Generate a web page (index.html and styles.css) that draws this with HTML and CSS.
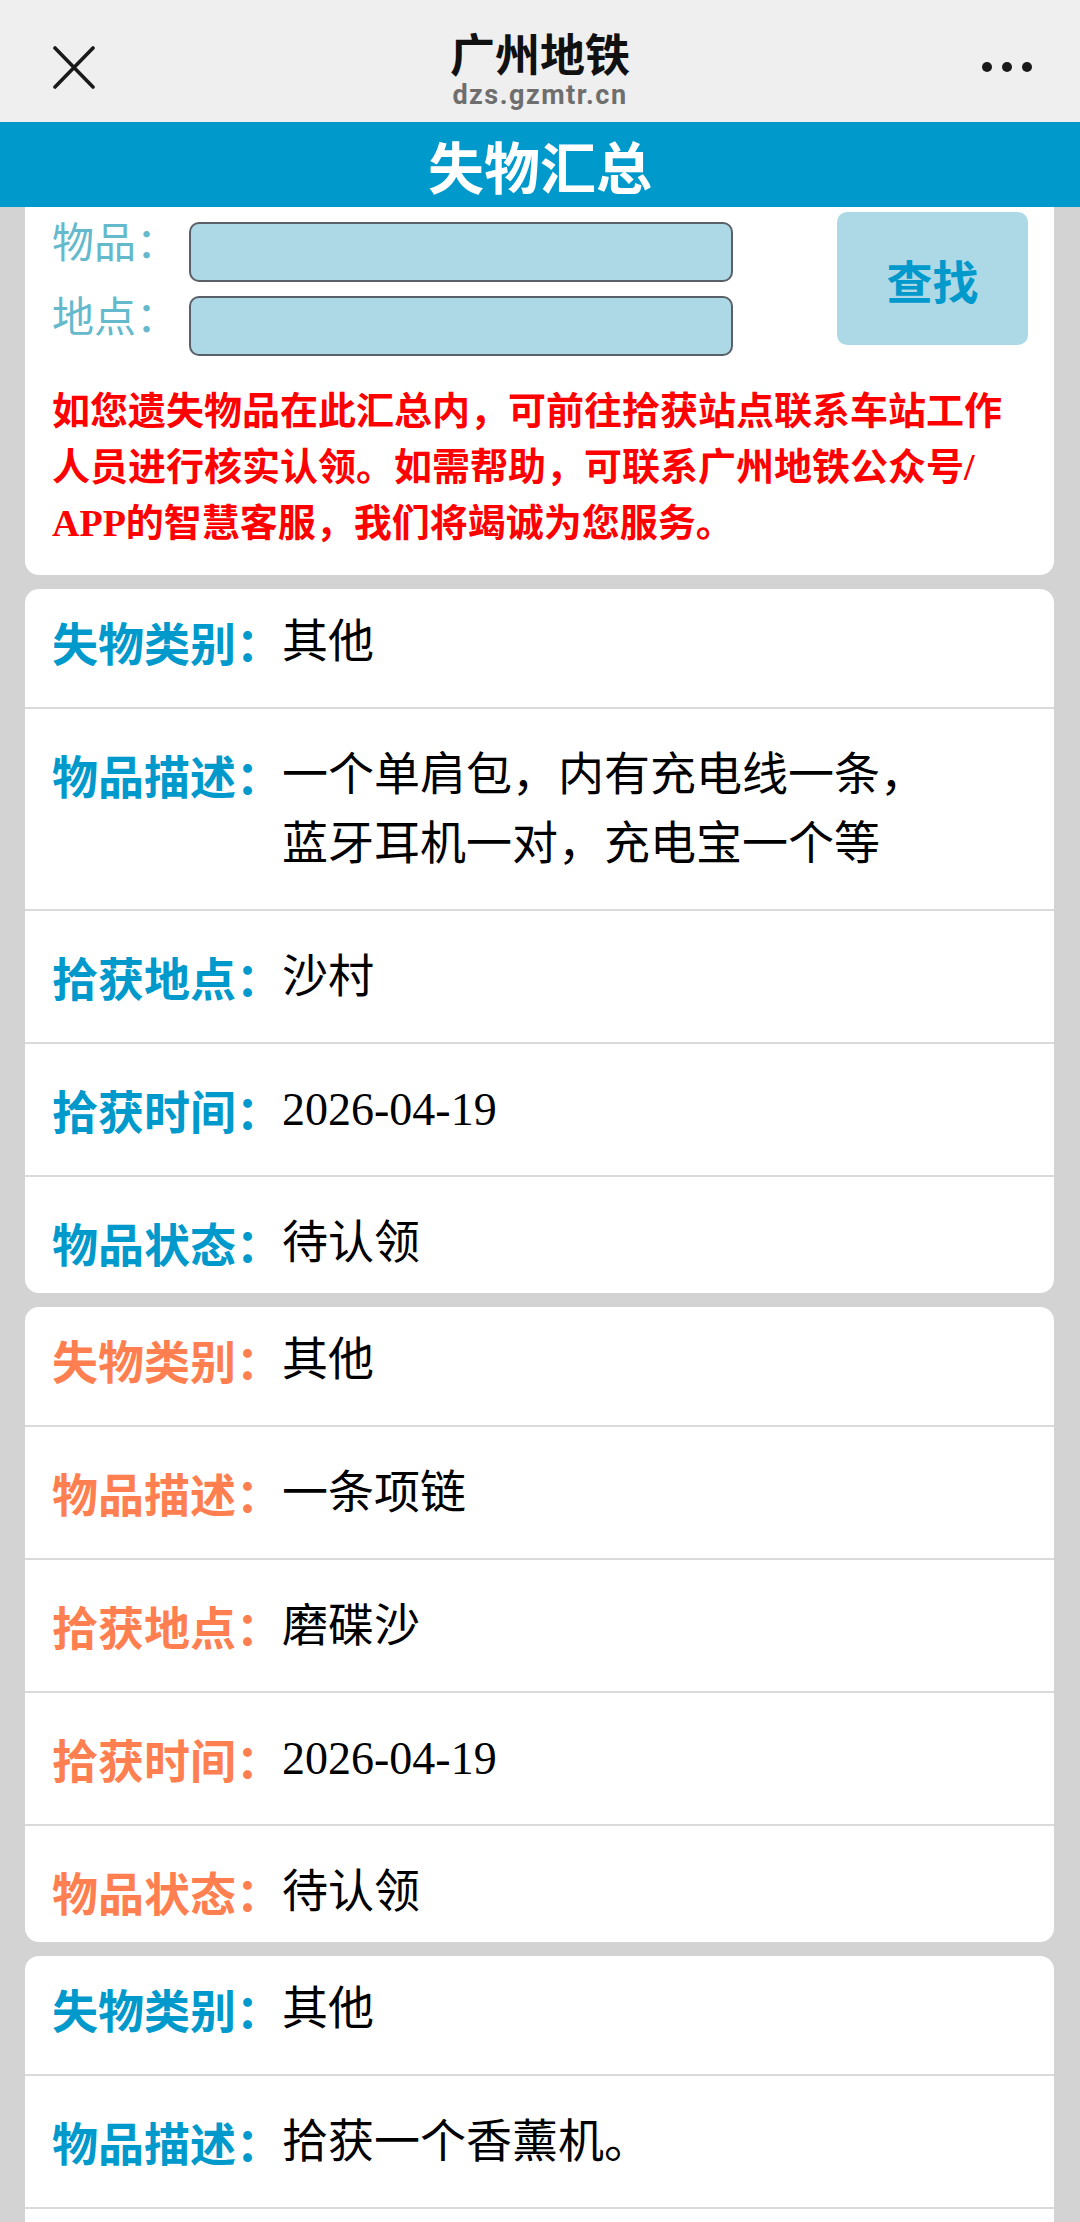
FILE: index.html
```html
<!DOCTYPE html>
<html lang="zh-CN">
<head>
  <meta charset="UTF-8">
  <title>失物汇总</title>
  <meta name="viewport" content="width=device-width, initial-scale=1.0">
  <link rel="stylesheet" href="styles.css">
</head>
<body>

  <div class="topbar">
    <svg class="close" viewBox="0 0 42 43" width="42" height="43">
      <path d="M2 2 L40 41 M40 2 L2 41" stroke="#1a1a1a" stroke-width="3.6" stroke-linecap="round" fill="none"/>
    </svg>
    <div class="title">
      <h1>广州地铁</h1>
      <div class="domain">dzs.gzmtr.cn</div>
    </div>
    <svg class="more" viewBox="0 0 50 12" width="50" height="12">
      <circle cx="5" cy="6" r="5" fill="#1a1a1a"/>
      <circle cx="25" cy="6" r="5" fill="#1a1a1a"/>
      <circle cx="45" cy="6" r="5" fill="#1a1a1a"/>
    </svg>
  </div>

  <div class="banner">失物汇总</div>

  <div class="content">
    <!-- search -->
    <div class="search-card">
      <div class="search-form">
        <div class="fields">
          <div class="field">
            <label>物品：</label>
            <input type="text">
          </div>
          <div class="field">
            <label>地点：</label>
            <input type="text">
          </div>
        </div>
        <button class="search-btn">查找</button>
      </div>
      <p class="notice">如您遗失物品在此汇总内，可前往拾获站点联系车站工作人员进行核实认领。如需帮助，可联系广州地铁公众号/<wbr>APP的智慧客服，我们将竭诚为您服务。</p>
    </div>

    <!-- list -->
    <div class="item">
      <div class="row"><span class="label">失物类别：</span><span class="value">其他</span></div>
      <div class="row"><span class="label">物品描述：</span><span class="value">一个单肩包，内有充电线一条，<br>蓝牙耳机一对，充电宝一个等</span></div>
      <div class="row"><span class="label">拾获地点：</span><span class="value">沙村</span></div>
      <div class="row"><span class="label">拾获时间：</span><span class="value">2026-04-19</span></div>
      <div class="row"><span class="label">物品状态：</span><span class="value">待认领</span></div>
    </div>

    <div class="item alt">
      <div class="row"><span class="label">失物类别：</span><span class="value">其他</span></div>
      <div class="row"><span class="label">物品描述：</span><span class="value">一条项链</span></div>
      <div class="row"><span class="label">拾获地点：</span><span class="value">磨碟沙</span></div>
      <div class="row"><span class="label">拾获时间：</span><span class="value">2026-04-19</span></div>
      <div class="row"><span class="label">物品状态：</span><span class="value">待认领</span></div>
    </div>

    <div class="item">
      <div class="row"><span class="label">失物类别：</span><span class="value">其他</span></div>
      <div class="row"><span class="label">物品描述：</span><span class="value">拾获一个香薰机。</span></div>
      <div class="row"><span class="label">拾获地点：</span><span class="value">猎德</span></div>
      <div class="row"><span class="label">拾获时间：</span><span class="value">2026-04-19</span></div>
      <div class="row"><span class="label">物品状态：</span><span class="value">待认领</span></div>
    </div>
  </div>

</body>
</html>
```

FILE: styles.css
```css
body {
  margin: 0;
  background: #d3d3d3;
  font-family: "Liberation Serif", "Noto Sans CJK SC", serif;
  color: #000;
}

/* wechat-style top bar */
.topbar {
  height: 122px;
  background: #efefef;
  display: grid;
  grid-template-columns: 1fr auto 1fr;
  align-items: start;
}

.close {
  margin: 46px 0 0 53px;
}

.title {
  text-align: center;
  padding-top: 26px;
}

.title h1 {
  margin: 0;
  font: bold 45px/54px "Noto Sans CJK SC", sans-serif;
  color: #111;
}

.domain {
  font: bold 27px/28px Roboto, sans-serif;
  color: #6e6e6e;
  letter-spacing: 1.5px;
  margin-top: 1px;
}

.more {
  justify-self: end;
  margin: 61px 48px 0 0;
}

.banner {
  height: 85px;
  line-height: 85px;
  background: #0099cc;
  color: #fff;
  text-align: center;
  font-family: "Noto Sans CJK SC", sans-serif;
  font-size: 56px;
  font-weight: bold;
}

.content {
  padding: 0 26px 0 25px;
}

/* search box */
.search-card {
  background: #fff;
  border-radius: 0 0 14px 14px;
  padding: 5px 20px 24px 27px;
}

.search-form {
  display: flex;
  justify-content: space-between;
  align-items: flex-start;
  margin-right: 6px;
}

.fields {
  display: flex;
  flex-direction: column;
  gap: 14px;
  padding-top: 10px;
}

.field {
  display: flex;
  align-items: flex-start;
}

.field label {
  width: 137px;
  font: 42px/36px "Noto Sans CJK SC", sans-serif;
  color: #65b9cc;
}

.field input {
  width: 544px;
  height: 60px;
  box-sizing: border-box;
  border: 2px solid #5a6068;
  border-radius: 10px;
  background: #add8e6;
  margin: 0;
}

.search-btn {
  width: 191px;
  height: 133px;
  border: none;
  border-radius: 10px;
  background: #add8e6;
  color: #0099cc;
  font: bold 46px "Noto Sans CJK SC", sans-serif;
  padding: 0;
}

.notice {
  margin: 27px 0 0;
  color: #ff0000;
  font-weight: bold;
  font-size: 38px;
  line-height: 56px;
}

/* lost item cards */
.item {
  background: #fff;
  border-radius: 14px;
  margin-top: 14px;
  overflow: hidden;
}

.row {
  display: flex;
  padding: 31px 27px;
  border-top: 2px solid #dadada;
  font-size: 46px;
  line-height: 69px;
}

.row:first-child {
  border-top: none;
  padding-top: 18px;
}

.row:last-child {
  padding-bottom: 16px;
}

.label {
  flex: none;
  width: 230px;
  font-family: "Noto Sans CJK SC", sans-serif;
  font-weight: bold;
  color: #0099cc;
}

.alt .label {
  color: #ff7f50;
}
```
